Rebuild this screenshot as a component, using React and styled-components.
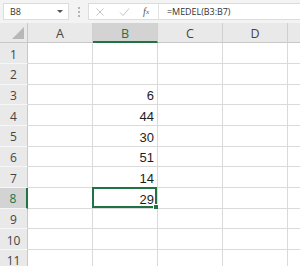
import React from "react";
import styled, { createGlobalStyle, css } from "styled-components";

const GREEN = "#217346";

const GlobalStyle = createGlobalStyle`
  html, body {
    margin: 0;
    padding: 0;
    background: #ffffff;
  }
  * {
    box-sizing: border-box;
  }
`;

const Window = styled.div`
  width: 300px;
  height: 266px;
  overflow: hidden;
  display: flex;
  flex-direction: column;
  background: #ffffff;
  font-family: "Open Sans", "Noto Sans", sans-serif;
`;

const TopBar = styled.div`
  height: 23px;
  flex: none;
  display: flex;
  align-items: flex-start;
  padding: 3px 0 0 3px;
  background: #f3f3f3;
`;

const NameBox = styled.div`
  width: 66px;
  height: 17px;
  display: flex;
  align-items: center;
  justify-content: space-between;
  padding: 0 5px 0 6px;
  background: #ffffff;
  border: 1px solid #dcdcdc;
  font-size: 9px;
  color: #333;
`;

const Caret = styled.span`
  width: 0;
  height: 0;
  border-left: 3px solid transparent;
  border-right: 3px solid transparent;
  border-top: 3px solid #555;
`;

const Grip = styled.div`
  width: 19px;
  height: 17px;
  display: flex;
  flex-direction: column;
  align-items: center;
  justify-content: center;
  gap: 2px;

  span {
    width: 2px;
    height: 2px;
    background: #b5b5b5;
  }
`;

const FormulaBar = styled.div`
  flex: 1;
  height: 17px;
  display: flex;
  background: #ffffff;
  border: 1px solid #dcdcdc;
  border-right: none;
`;

const FxButtons = styled.div`
  width: 70px;
  display: flex;
  align-items: center;
  justify-content: space-between;
  padding: 0 9px 0 6px;
  border-right: 1px solid #e2e2e2;
`;

const FxIcon = styled.span`
  display: flex;
  align-items: center;
  font-family: "Liberation Serif", serif;
  font-style: italic;
  font-size: 10px;
  color: #555;

  sub {
    font-size: 7px;
  }
`;

const FormulaInput = styled.div`
  flex: 1;
  display: flex;
  align-items: center;
  padding-left: 8px;
  font-size: 9px;
  letter-spacing: -0.05px;
  color: #333;
`;

const Sheet = styled.div`
  flex: 1;
  display: grid;
  grid-template-columns: 28px repeat(5, 65px);
  grid-template-rows: 20.33px;
  grid-auto-rows: 20.67px;
  width: 353px;
`;

const headerBase = css`
  display: flex;
  align-items: center;
  justify-content: center;
  background: #e9e9e9;
  font-size: 12.5px;
  color: #444;
`;

const Corner = styled.div`
  ${headerBase};
  position: relative;
  border-right: 1px solid #c8c8c8;
  border-bottom: 1px solid #c8c8c8;

  &::after {
    content: "";
    position: absolute;
    right: 3px;
    bottom: 3px;
    width: 0;
    height: 0;
    border-left: 12px solid transparent;
    border-bottom: 12px solid #b7b7b7;
  }
`;

const ColHeader = styled.div`
  ${headerBase};
  padding-top: 2px;
  border-right: 1px solid #d0d0d0;
  border-bottom: 1px solid #c8c8c8;
  ${({ $selected }) =>
    $selected &&
    css`
      background: #d3d3d3;
      color: ${GREEN};
      border-bottom: 2px solid ${GREEN};
    `}
`;

const RowHeader = styled.div`
  ${headerBase};
  font-size: 12px;
  padding-top: 2px;
  border-right: 1px solid #c8c8c8;
  border-bottom: 1px solid #f6f6f6;
  ${({ $selected }) =>
    $selected &&
    css`
      background: #d3d3d3;
      color: ${GREEN};
      border-right: 2px solid ${GREEN};
    `}
`;

const Cell = styled.div`
  position: relative;
  display: flex;
  align-items: flex-end;
  justify-content: flex-end;
  padding: 0 3px 1px 0;
  border-right: 1px solid #dadada;
  border-bottom: 1px solid #dadada;
  font-family: "Liberation Sans", Arial, sans-serif;
  font-size: 13px;
  color: #1e1e1e;
`;

const Selection = styled.div`
  position: absolute;
  left: -1px;
  top: -1px;
  right: 0;
  bottom: 0;
  border: 2px solid ${GREEN};
  pointer-events: none;
`;

const FillHandle = styled.div`
  position: absolute;
  right: -4px;
  bottom: -4px;
  width: 6px;
  height: 6px;
  background: ${GREEN};
  border: 1px solid #ffffff;
`;

// the fifth column is only partly on screen, its letter falls outside
const columns = ["A", "B", "C", "D", ""];
const values = { 3: 6, 4: 44, 5: 30, 6: 51, 7: 14, 8: 29 };
const active = { col: "B", row: 8 };

const CrossIcon = () => (
  <svg width="10" height="10" viewBox="0 0 10 10">
    <path d="M1.5 1.5 L8.5 8.5 M8.5 1.5 L1.5 8.5" stroke="#c4c4c4" strokeWidth="1" fill="none" />
  </svg>
);

const CheckIcon = () => (
  <svg width="11" height="10" viewBox="0 0 11 10">
    <path d="M1 5.5 L4 8.5 L10 1.5" stroke="#c4c4c4" strokeWidth="1" fill="none" />
  </svg>
);

export default function App() {
  const rows = Array.from({ length: 11 }, (_, i) => i + 1);

  return (
    <>
      <GlobalStyle />
      <Window>
        <TopBar>
          <NameBox>
            <span>B8</span>
            <Caret />
          </NameBox>
          <Grip>
            <span />
            <span />
            <span />
          </Grip>
          <FormulaBar>
            <FxButtons>
              <CrossIcon />
              <CheckIcon />
              <FxIcon>
                f<sub>x</sub>
              </FxIcon>
            </FxButtons>
            <FormulaInput>=MEDEL(B3:B7)</FormulaInput>
          </FormulaBar>
        </TopBar>

        <Sheet>
          <Corner />
          {columns.map((c, i) => (
            <ColHeader key={i} $selected={c === active.col}>
              {c}
            </ColHeader>
          ))}
          {rows.map((r) => (
            <React.Fragment key={r}>
              <RowHeader $selected={r === active.row}>{r}</RowHeader>
              {columns.map((c, i) => {
                const isActive = c === active.col && r === active.row;
                return (
                  <Cell key={i}>
                    {c === "B" && values[r] !== undefined ? values[r] : null}
                    {isActive && (
                      <Selection>
                        <FillHandle />
                      </Selection>
                    )}
                  </Cell>
                );
              })}
            </React.Fragment>
          ))}
        </Sheet>
      </Window>
    </>
  );
}
